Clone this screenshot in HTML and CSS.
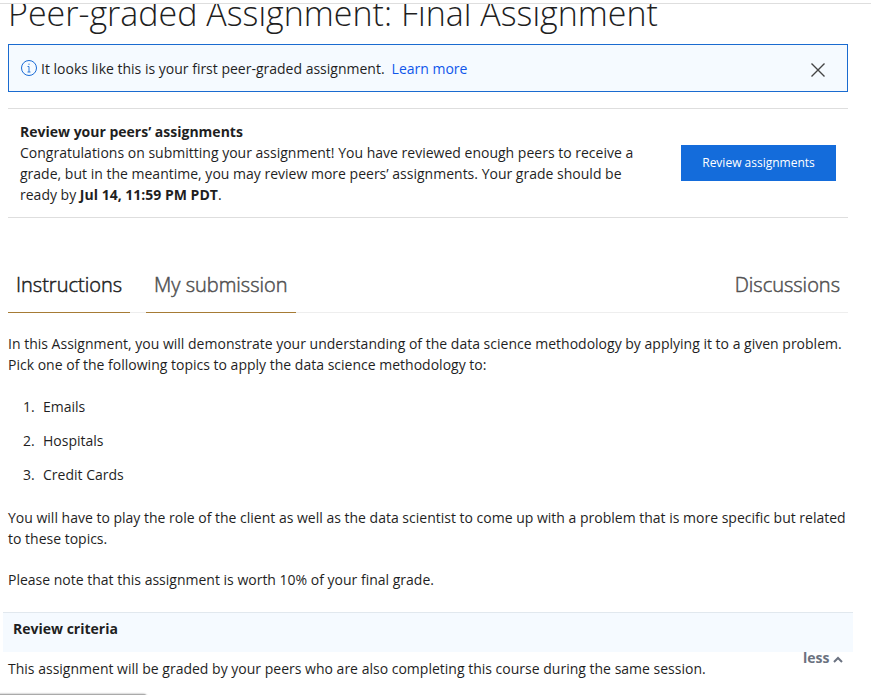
FILE: index.html
```html
<!DOCTYPE html>
<html lang="en">
<head>
<meta charset="utf-8">
<title>Peer-graded Assignment</title>
<link rel="stylesheet" href="styles.css">
</head>
<body>
<div class="page">
  <main class="content">
    <h1 class="title">Peer-graded Assignment: Final Assignment</h1>
    <div class="notice">
      <svg class="info" width="16" height="16" viewBox="0 0 16 16" fill="none" stroke="#1a6bd6"><circle cx="8" cy="8" r="7.5"/><path d="M6.5 6.5H8V12M6.5 12h3M8 3.6v1.3" stroke-width=".9"/></svg>
      <span class="notice-text">It looks like this is your first peer-graded assignment.</span>
      <a class="learn">Learn more</a>
      <svg class="close" width="14" height="14" viewBox="0 0 14 14" fill="none" stroke="#444" stroke-width="1.4"><path d="M.5.5l13 13M13.5.5l-13 13"/></svg>
    </div>
    <section class="review">
      <div class="review-copy">
        <h2>Review your peers’ assignments</h2>
        <p>Congratulations on submitting your assignment! You have reviewed enough peers to receive a<br>grade, but in the meantime, you may review more peers’ assignments. Your grade should be<br>ready by <b>Jul 14, 11:59 PM PDT</b>.</p>
      </div>
      <button class="cta">Review assignments</button>
    </section>
    <nav class="tabs">
      <a class="tab active">Instructions</a>
      <a class="tab second">My submission</a>
      <a class="tab discuss">Discussions</a>
    </nav>
    <p class="intro">In this Assignment, you will demonstrate your understanding of the data science methodology by applying it to a given problem.<br>Pick one of the following topics to apply the data science methodology to:</p>
    <ol class="topics"><li>Emails</li><li>Hospitals</li><li>Credit Cards</li></ol>
    <p class="role">You will have to play the role of the client as well as the data scientist to come up with a problem that is more specific but related<br>to these topics.</p>
    <p class="note">Please note that this assignment is worth 10% of your final grade.</p>
    <h3 class="criteria">Review criteria</h3>
    <div class="foot">
      <p>This assignment will be graded by your peers who are also completing this course during the same session.</p>
      <a class="less">less <svg width="10" height="7" viewBox="0 0 10 7" fill="none" stroke="#6b7280" stroke-width="2"><path d="M1 6l4-4 4 4"/></svg></a>
    </div>
  </main>
  <div class="status"></div>
</div>
</body>
</html>
```
FILE: styles.css
```css
* { box-sizing: border-box; }
body { margin: 0; background: #fff; color: #1f1f1f; font: 14px/21px "Open Sans", sans-serif; }
h1, h2, h3, p, ol { margin: 0; padding: 0; }
.page { height: 695px; position: relative; overflow: hidden; }
.page::before { content: ""; position: absolute; top: 0; left: 0; right: 0; height: 3px; background: #fff; border-bottom: 1px solid #dedede; }
.content { width: 840px; margin-left: 8px; }
.title { height: 44px; font-size: 34px; font-weight: 300; line-height: 26px; white-space: nowrap; color: #1f1f1f; }
.notice { height: 48px; border: 1px solid #1a6bd0; background: #f5faff; display: flex; align-items: center; padding: 0 22px 0 12px; }
.notice-text { margin-left: 4px; }
.learn { color: #0f56eb; margin-left: 7px; }
.close { margin-left: auto; position: relative; top: 2px; }
.review { margin-top: 16px; height: 110px; border-top: 1px solid #dedede; border-bottom: 1px solid #dedede; padding: 0 12px; display: flex; align-items: center; justify-content: space-between; }
.review-copy { white-space: nowrap; padding-bottom: 1px; }
.review h2 { font-size: 14px; font-weight: 700; line-height: 21px; }
.review-copy p { letter-spacing: .006px; }
.cta { width: 155px; height: 36px; background: #146cdb; color: #fff; border: 0; padding: 0 0 2px; font: 12px "Open Sans", sans-serif; }
.tabs { margin-top: 40px; height: 55px; border-bottom: 1px solid #eee; display: flex; font-size: 20px; font-weight: 300; line-height: 54px; color: #525252; -webkit-text-stroke: .5px currentColor; }
.tab { height: 55px; border-bottom: 1px solid #a67b35; padding: 0 8px; white-space: nowrap; }
.active { width: 122px; color: #1f1f1f; }
.second { width: 150px; margin-left: 16px; }
.discuss { margin-left: auto; border: 0; }
.intro { margin-top: 20px; white-space: nowrap; letter-spacing: .006px; }
.topics { margin-top: 21px; padding-left: 15px; list-style: none; counter-reset: topic; }
.topics li { margin-bottom: 13px; display: flex; counter-increment: topic; }
.topics li::before { content: counter(topic) "."; width: 20px; }
.role { margin-top: 22px; white-space: nowrap; }
.note { margin-top: 20px; }
.criteria { margin: 22px -5px 0; height: 40px; padding: 0 10px; background: #f5faff; border-top: 1px solid #e1e8ee; font-size: 14px; line-height: 32px; }
.foot { display: flex; justify-content: space-between; padding: 0 5px 0 0; white-space: nowrap; }
.foot p { padding-top: 6px; letter-spacing: .006px; }
.less { color: #6b7280; font-weight: 700; line-height: 12px; }
.status { position: absolute; left: -4px; bottom: -3px; width: 151px; height: 4px; border-radius: 0 4px 0 0; background: #aaa; box-shadow: 0 0 2px #888; }
```
